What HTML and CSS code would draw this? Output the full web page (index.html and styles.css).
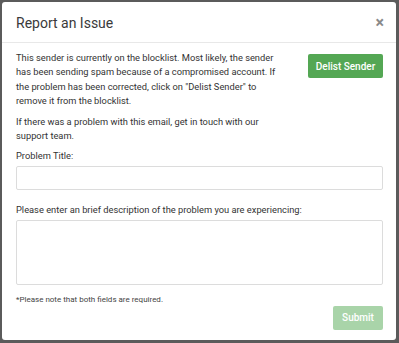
FILE: index.html
```html
<!DOCTYPE html>
<html>
<head>
<meta charset="utf-8">
<link rel="stylesheet" href="styles.css">
</head>
<body>
<div class="modal">
  <div class="modal-header">
    <h4 class="modal-title">Report an Issue</h4>
    <span class="close">&times;</span>
  </div>
  <div class="modal-body">
    <div class="intro">
      <div class="intro-text">
        <p>This sender is currently on the blocklist. Most likely, the sender has been sending spam because of a compromised account. If the problem has been corrected, click on "Delist Sender" to remove it from the blocklist.</p>
        <p>If there was a problem with this email, get in touch with our support team.</p>
      </div>
      <button class="btn btn-delist">Delist Sender</button>
    </div>
    <label class="field-label">Problem Title:</label>
    <div class="input"></div>
    <label class="field-label">Please enter an brief description of the problem you are experiencing:</label>
    <div class="textarea"></div>
    <p class="note">*Please note that both fields are required.</p>
    <div class="footer">
      <button class="btn btn-submit">Submit</button>
    </div>
  </div>
</div>
</body>
</html>
```

FILE: styles.css
```css
html, body {
  margin: 0;
  padding: 0;
}
body {
  background: #5b5b5b;
  width: 399px;
  height: 343px;
  overflow: hidden;
  font-family: Roboto, "Liberation Sans", sans-serif;
  color: #333;
}
.modal {
  margin: 2px 3px 0 2px;
  width: 394px;
  height: 338px;
  background: #fff;
  border-radius: 3px;
  box-sizing: border-box;
}
.modal-header {
  height: 41px;
  box-sizing: border-box;
  border-bottom: 1px solid #e8e8e8;
  display: flex;
  align-items: center;
  justify-content: space-between;
  padding: 1px 12px 0 14px;
}
.modal-title {
  margin: 0;
  font-weight: 400;
  font-size: 14px;
  color: #3a3a3a;
}
.close {
  font-size: 16px;
  font-weight: 700;
  color: #8a8a8a;
  line-height: 1;
}
.modal-body {
  padding: 8px 13px 0 14px;
}
.intro {
  display: flex;
  justify-content: space-between;
  align-items: flex-start;
}
.intro-text {
  width: 269px;
}
.intro-text p {
  margin: 0 0 7px 0;
  font-size: 9.3px;
  line-height: 14.3px;
}
.intro-text p:last-child {
  margin-bottom: 5px;
}
.btn {
  font-family: Roboto, "Liberation Sans", sans-serif;
  border: none;
  color: #fff;
  border-radius: 2px;
  font-size: 10px;
  font-weight: 500;
  padding: 0;
}
.btn-delist {
  margin-top: 3px;
  width: 75px;
  height: 24px;
  background: #54a754;
}
.field-label {
  display: block;
  font-size: 9.3px;
  line-height: 14px;
  margin: 0 0 3px 0;
}
.input {
  height: 24px;
  border: 1px solid #dcdcdc;
  border-radius: 2px;
  box-sizing: border-box;
  margin-bottom: 13px;
}
.textarea {
  height: 65px;
  border: 1px solid #dcdcdc;
  border-radius: 2px;
  box-sizing: border-box;
}
.note {
  font-size: 8px;
  line-height: 12px;
  color: #444;
  margin: 9px 0 0 0;
}
.footer {
  display: flex;
  justify-content: flex-end;
}
.btn-submit {
  width: 50px;
  height: 24px;
  background: #a9d4a9;
}
```
